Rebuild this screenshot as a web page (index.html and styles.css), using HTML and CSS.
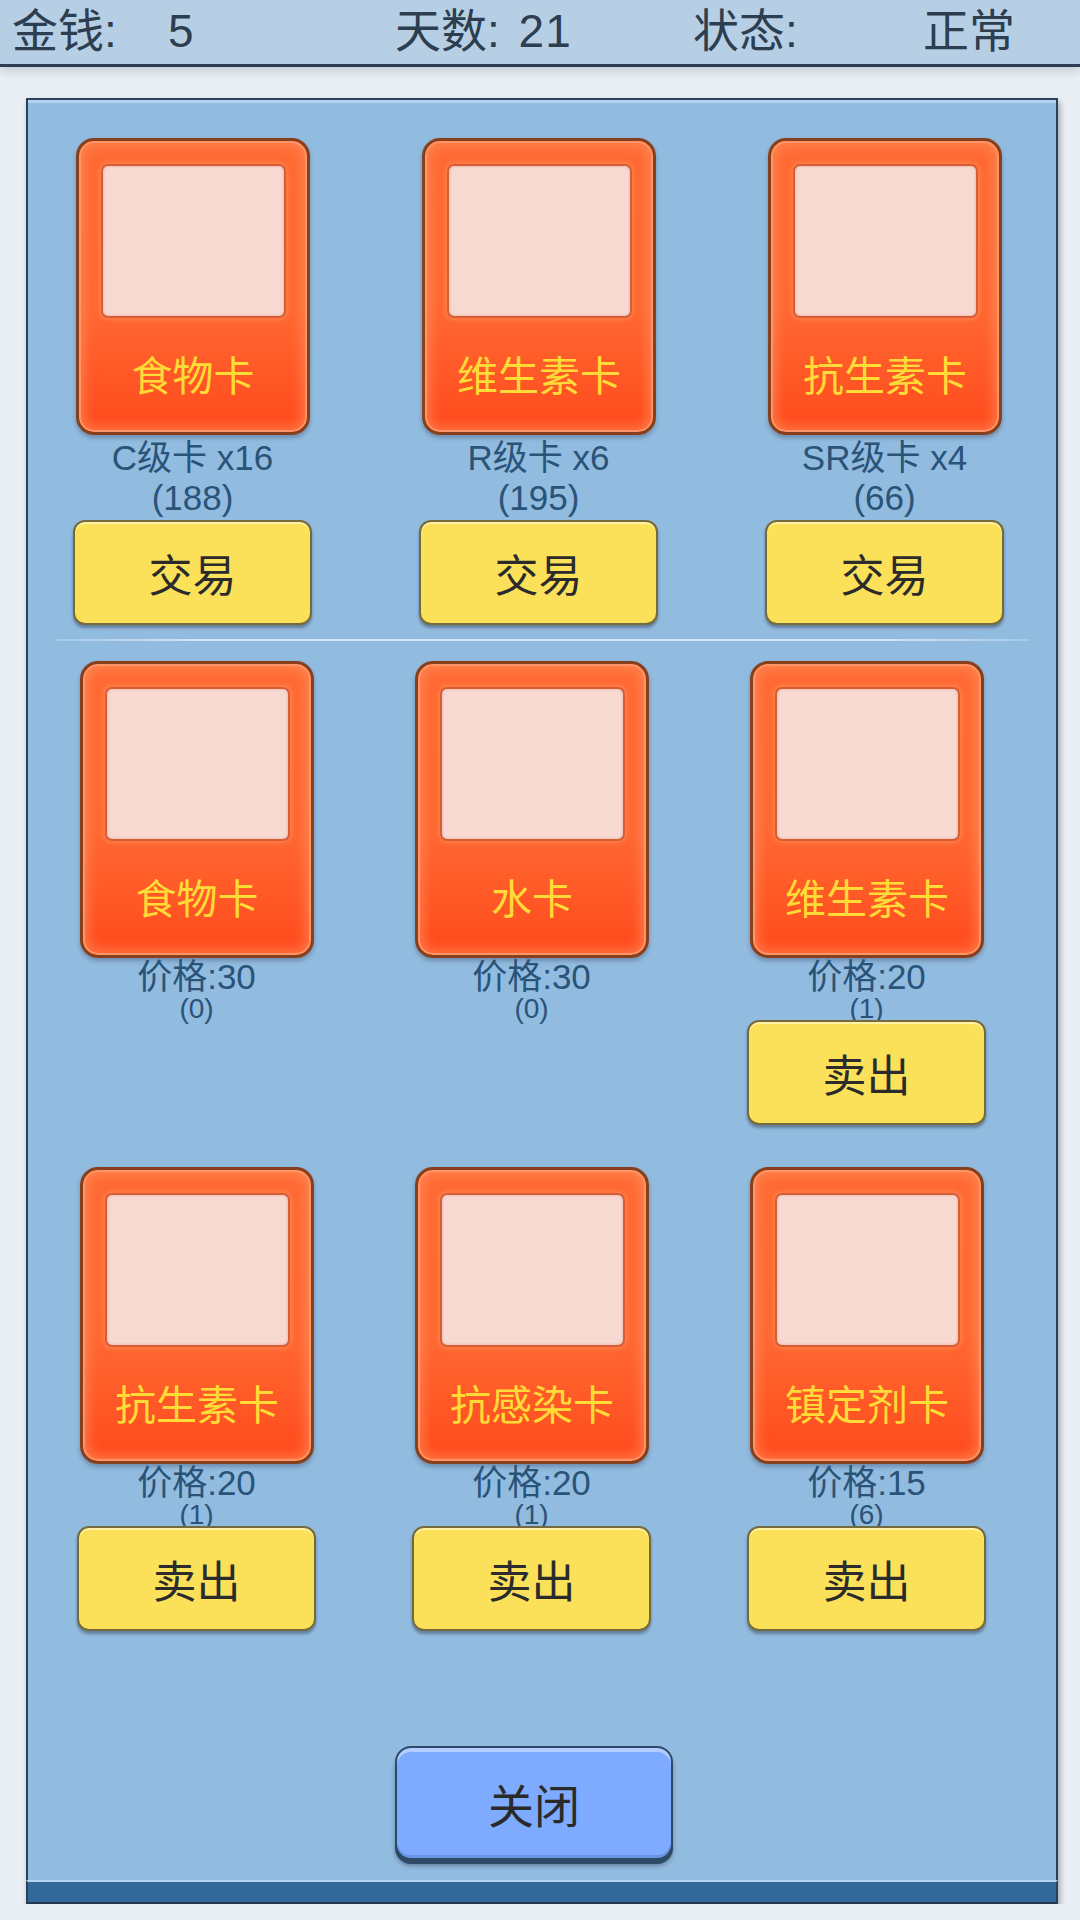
FILE: index.html
```html
<!DOCTYPE html>
<html>
<head>
  <meta charset="utf-8">
  <title>商店</title>
  <link rel="stylesheet" href="styles.css">
</head>
<body>
  <header class="topbar">
    <span class="stat">金钱:</span>
    <span class="stat">5</span>
    <span class="stat">天数: <span class="num">21</span></span>
    <span class="stat">状态:</span>
    <span class="stat">正常</span>
  </header>

  <main class="panel">
    <!-- buy packs -->
    <section class="trade-row">
      <div class="slot">
        <div class="card">
          <div class="card-pic"></div>
          <div class="card-name">食物卡</div>
        </div>
        <div class="info-main">C级卡 x16</div>
        <div class="info-main">(188)</div>
        <button class="btn-yellow">交易</button>
      </div>
      <div class="slot">
        <div class="card">
          <div class="card-pic"></div>
          <div class="card-name">维生素卡</div>
        </div>
        <div class="info-main">R级卡 x6</div>
        <div class="info-main">(195)</div>
        <button class="btn-yellow">交易</button>
      </div>
      <div class="slot">
        <div class="card">
          <div class="card-pic"></div>
          <div class="card-name">抗生素卡</div>
        </div>
        <div class="info-main">SR级卡 x4</div>
        <div class="info-main">(66)</div>
        <button class="btn-yellow">交易</button>
      </div>
    </section>

    <div class="divider"></div>

    <!-- sell cards -->
    <section class="sell-grid">
      <div class="slot">
        <div class="card">
          <div class="card-pic"></div>
          <div class="card-name">食物卡</div>
        </div>
        <div class="price">价格:30</div>
        <div class="count">(0)</div>
      </div>
      <div class="slot">
        <div class="card">
          <div class="card-pic"></div>
          <div class="card-name">水卡</div>
        </div>
        <div class="price">价格:30</div>
        <div class="count">(0)</div>
      </div>
      <div class="slot">
        <div class="card">
          <div class="card-pic"></div>
          <div class="card-name">维生素卡</div>
        </div>
        <div class="price">价格:20</div>
        <div class="count">(1)</div>
        <button class="btn-yellow">卖出</button>
      </div>
      <div class="slot">
        <div class="card">
          <div class="card-pic"></div>
          <div class="card-name">抗生素卡</div>
        </div>
        <div class="price">价格:20</div>
        <div class="count">(1)</div>
        <button class="btn-yellow">卖出</button>
      </div>
      <div class="slot">
        <div class="card">
          <div class="card-pic"></div>
          <div class="card-name">抗感染卡</div>
        </div>
        <div class="price">价格:20</div>
        <div class="count">(1)</div>
        <button class="btn-yellow">卖出</button>
      </div>
      <div class="slot">
        <div class="card">
          <div class="card-pic"></div>
          <div class="card-name">镇定剂卡</div>
        </div>
        <div class="price">价格:15</div>
        <div class="count">(6)</div>
        <button class="btn-yellow">卖出</button>
      </div>
    </section>

    <div class="panel-foot">
      <button class="btn-close">关闭</button>
    </div>
    <div class="panel-bar"></div>
  </main>
</body>
</html>
```

FILE: styles.css
```css
/* shop screen */
body {
  margin: 0;
  background-color: #e8eef3;
  font-family: "Liberation Sans", "Noto Sans CJK SC", sans-serif;
}

button {
  font-family: inherit;
  cursor: pointer;
}

.topbar {
  display: grid;
  grid-template-columns: 156px 227px 298px 230px auto;
  height: 64px;
  padding-left: 12px;
  background-color: #b7cfe4;
  border-bottom: 3px solid #2a3d52;
  box-shadow: 0 4px 8px rgba(40, 60, 80, 0.18);
  color: #2c3e50;
  font-size: 46px;
  line-height: 62px;
}

.topbar .num {
  margin-left: 6px;
  letter-spacing: 1px;
}

.panel {
  width: 1032px;
  margin: 31px 0 0 26px;
  box-sizing: border-box;
  border: 2px solid #2b4157;
  border-bottom: none;
  background-color: #92bbe0;
  box-shadow: inset 0 3px 0 #b3d2ee, 2px 4px 6px rgba(0, 0, 0, 0.3);
}

.trade-row {
  display: grid;
  grid-template-columns: 239px 239px 239px;
  column-gap: 107px;
  padding: 38px 0 0 45px;
}

.sell-grid {
  display: grid;
  grid-template-columns: 239px 239px 239px;
  column-gap: 96px;
  row-gap: 42px;
  padding: 20px 0 0 49px;
}

.slot {
  display: flex;
  flex-direction: column;
  align-items: center;
}

.card {
  width: 234px;
  height: 297px;
  box-sizing: border-box;
  padding: 23px 0 0 22px;
  border: 3px solid #87401e;
  border-radius: 18px;
  background: linear-gradient(#ff6a33, #ff6832 58%, #ff4a1c);
  box-shadow: inset 0 0 0 2px #ff9566, inset 0 0 12px 5px rgba(255, 150, 100, 0.6), 0 3px 4px rgba(30, 40, 60, 0.3);
}

.card-pic {
  width: 185px;
  height: 154px;
  box-sizing: border-box;
  border: 2px solid #d65d36;
  border-radius: 7px;
  background-color: #f7d9d1;
  box-shadow: inset 0 0 3px rgba(200, 90, 60, 0.4), 0 0 4px 2px rgba(255, 150, 100, 0.5);
}

.card-name {
  width: 185px;
  height: 110px;
  display: flex;
  align-items: center;
  justify-content: center;
  white-space: nowrap;
  color: #ffdb38;
  font-size: 41px;
}

.info-main {
  color: #2a5378;
  font-size: 35px;
  line-height: 40px;
}

.card + .info-main {
  margin-top: 3px;
}

.price {
  color: #2a5378;
  font-size: 35px;
  line-height: 38px;
}

.count {
  color: #2a5378;
  font-size: 28px;
  line-height: 26px;
}

.btn-yellow {
  width: 239px;
  height: 105px;
  margin-top: 2px;
  border: 2px solid #756a3c;
  border-radius: 12px;
  background-color: #fbe15a;
  box-shadow: inset 0 2px 0 #fff2a6, 0 3px 3px rgba(30, 40, 50, 0.4);
  color: #2b2b2b;
  font-size: 44px;
}

.count + .btn-yellow {
  margin-top: -2px;
}

.divider {
  height: 2px;
  margin: 14px 27px 0;
  background: linear-gradient(90deg, rgba(210, 230, 246, 0.3), #d4e6f6 15%, #d4e6f6 85%, rgba(210, 230, 246, 0.3));
}

.panel-foot {
  display: flex;
  justify-content: center;
  padding: 115px 16px 20px 0;
}

.btn-close {
  width: 278px;
  height: 114px;
  border: 2px solid #2d4a66;
  border-radius: 16px;
  background-color: #7eaaff;
  box-shadow: inset 0 4px 0 #b3cdff, inset 0 -3px 0 #6a95e6, 0 4px 0 #2d4a66, 0 6px 4px rgba(0, 0, 0, 0.3);
  color: #2a2a2a;
  font-size: 46px;
}

.panel-bar {
  height: 20px;
  margin: 0 -2px;
  border-top: 2px solid #b6d6f0;
  border-bottom: 2px solid #24394f;
  border-left: 2px solid #2b4157;
  border-right: 2px solid #2b4157;
  background-color: #33689a;
}
```
